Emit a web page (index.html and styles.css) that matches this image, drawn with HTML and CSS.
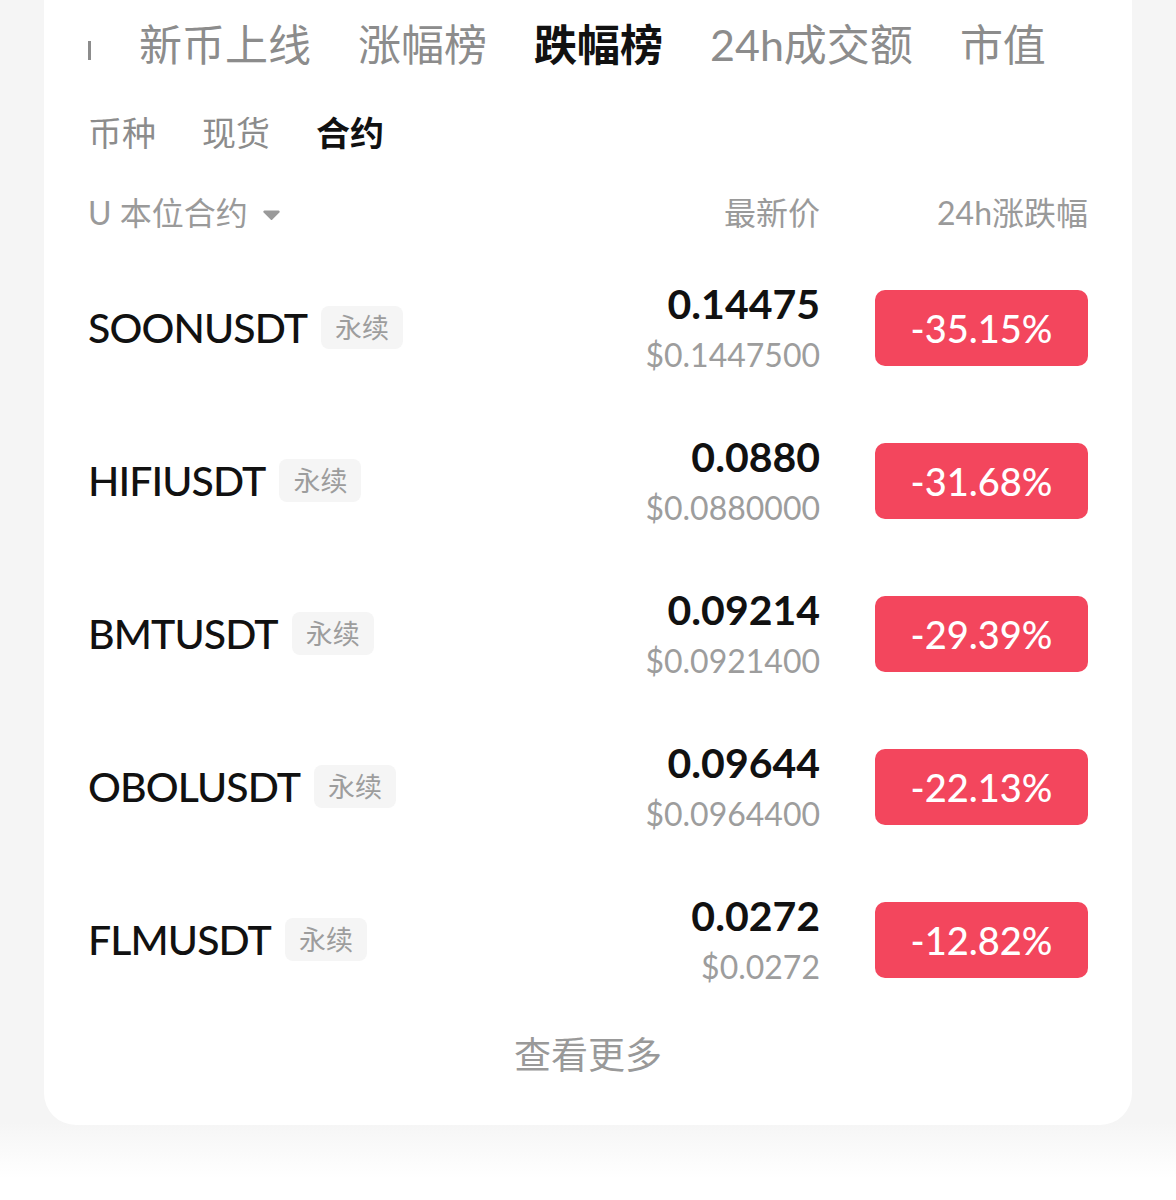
FILE: index.html
```html
<!DOCTYPE html>
<html lang="zh-CN">
<head>
    <meta charset="UTF-8">
    <meta name="viewport" content="width=device-width, initial-scale=1.0">
    <title>跌幅榜</title>
    <link rel="stylesheet" href="styles.css">
</head>
<body>
    <div class="card">
        <div class="tabs">
            <span class="tab-edge"></span>
            <span class="tab">新币上线</span>
            <span class="tab">涨幅榜</span>
            <span class="tab active">跌幅榜</span>
            <span class="tab">24h成交额</span>
            <span class="tab">市值</span>
        </div>

        <div class="subtabs">
            <span class="subtab">币种</span>
            <span class="subtab">现货</span>
            <span class="subtab active">合约</span>
        </div>

        <div class="list-head">
            <span class="market">U 本位合约
                <svg class="caret" width="19" height="12" viewBox="0 0 19 12"><path d="M2.5 1.5h14a1.2 1.2 0 0 1 .9 2l-7 7a1.2 1.2 0 0 1-1.8 0l-7-7a1.2 1.2 0 0 1 .9-2z" fill="#9a9a9a"/></svg>
            </span>
            <span class="col-price">最新价</span>
            <span class="col-change">24h涨跌幅</span>
        </div>

        <div class="rows">
            <div class="row">
                <div class="name"><span class="symbol">SOONUSDT</span><span class="tag">永续</span></div>
                <div class="price"><div class="last">0.14475</div><div class="usd">$0.1447500</div></div>
                <div class="change">-35.15%</div>
            </div>
            <div class="row">
                <div class="name"><span class="symbol">HIFIUSDT</span><span class="tag">永续</span></div>
                <div class="price"><div class="last">0.0880</div><div class="usd">$0.0880000</div></div>
                <div class="change">-31.68%</div>
            </div>
            <div class="row">
                <div class="name"><span class="symbol">BMTUSDT</span><span class="tag">永续</span></div>
                <div class="price"><div class="last">0.09214</div><div class="usd">$0.0921400</div></div>
                <div class="change">-29.39%</div>
            </div>
            <div class="row">
                <div class="name"><span class="symbol">OBOLUSDT</span><span class="tag">永续</span></div>
                <div class="price"><div class="last">0.09644</div><div class="usd">$0.0964400</div></div>
                <div class="change">-22.13%</div>
            </div>
            <div class="row">
                <div class="name"><span class="symbol">FLMUSDT</span><span class="tag">永续</span></div>
                <div class="price"><div class="last">0.0272</div><div class="usd">$0.0272</div></div>
                <div class="change">-12.82%</div>
            </div>
        </div>

        <div class="more">查看更多</div>
    </div>
</body>
</html>
```

FILE: styles.css
```css
body {
    margin: 0;
    min-height: 1200px;
    font-family: "Lato", "Noto Sans CJK SC", sans-serif;
    background: linear-gradient(to bottom, #f5f5f5 1122px, #ffffff 1178px);
    overflow: hidden;
}

.card {
    margin: -30px 44px 0;
    padding: 45px 44px 45px;
    background-color: #fff;
    border-radius: 32px;
}

/* top ranking tabs */
.tabs {
    display: flex;
    align-items: center;
    gap: 47px;
    height: 60px;
    line-height: 60px;
    font-size: 43px;
    color: #8c8c8c;
    white-space: nowrap;
}

.tab-edge {
    width: 3px;
    height: 19px;
    margin-top: 11px;
    margin-right: 1px;
    background-color: #8c8c8c;
}

.tab.active {
    color: #111;
    font-weight: 700;
}

/* market type tabs */
.subtabs {
    display: flex;
    gap: 46px;
    margin-top: 33px;
    line-height: 50px;
    font-size: 34px;
    color: #8c8c8c;
}

.subtab.active {
    color: #111;
    font-weight: 700;
}

/* list */
.list-head,
.row {
    display: grid;
    grid-template-columns: 1fr auto 213px;
    column-gap: 55px;
    align-items: center;
}

.list-head {
    margin-top: 33px;
    line-height: 44px;
    font-size: 32px;
    color: #9a9a9a;
}

.market {
    display: flex;
    align-items: center;
}

.caret {
    margin-left: 14px;
    margin-top: 3px;
}

.col-price,
.col-change {
    text-align: right;
}

.rows {
    margin-top: 16px;
}

.row {
    height: 153px;
}

.name {
    display: flex;
    align-items: center;
    gap: 14px;
}

.symbol {
    font-size: 41px;
    font-weight: 500;
    letter-spacing: -0.9px;
    color: #111;
}

.tag {
    padding: 0 14px;
    height: 43px;
    line-height: 43px;
    font-size: 27px;
    color: #9d9d9d;
    background-color: #f5f5f5;
    border-radius: 8px;
}

.price {
    text-align: right;
}

.last {
    line-height: 54px;
    font-size: 41px;
    font-weight: 700;
    color: #111;
}

.usd {
    line-height: 48px;
    font-size: 32px;
    color: #9d9d9d;
}

.change {
    height: 76px;
    line-height: 76px;
    text-align: center;
    font-size: 38px;
    font-weight: 500;
    color: #fff;
    background-color: #f3465d;
    border-radius: 10px;
}

.more {
    margin-top: 14px;
    line-height: 50px;
    text-align: center;
    font-size: 37px;
    color: #999;
}
```
